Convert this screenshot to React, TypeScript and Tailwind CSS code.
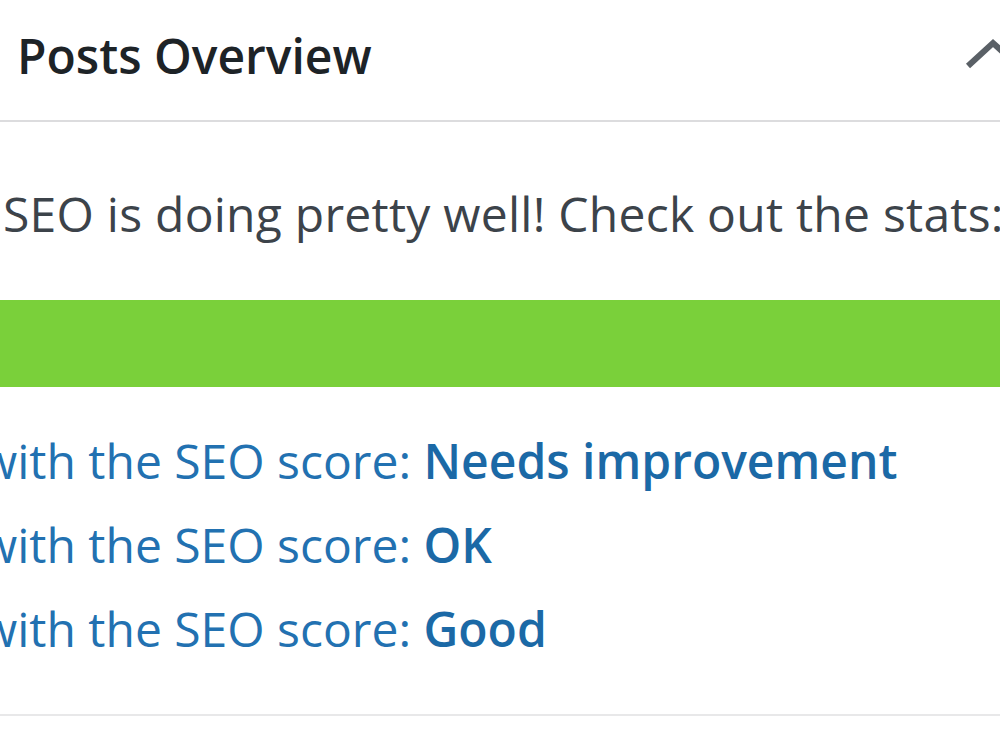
import React from 'react';

const scores = [
  { label: 'Needs improvement' },
  { label: 'OK' },
  { label: 'Good' },
];

export default function App() {
  return (
    <div className="relative h-[749px] w-[1000px] overflow-hidden bg-white font-['Open_Sans','Noto_Sans',sans-serif]">
      <header className="flex h-[122px] items-start border-b-2 border-[#dcdcde] pl-[17px] pt-[26px]">
        <h2 className="text-[48px] font-semibold leading-[60px] text-[#1d2327]">Posts Overview</h2>
        <svg className="ml-auto mr-[-20px] mt-[9px] shrink-0" width="60" height="40" viewBox="0 0 60 40">
          <polyline points="8,31 33,8 58,31" fill="none" stroke="#5a6066" strokeWidth="6" />
        </svg>
      </header>

      <p className="mt-[54px] whitespace-nowrap pl-[3px] text-[48px] leading-[76px] tracking-[0.25px] text-[#3c434a]">
        SEO is doing pretty well! Check out the stats:
      </p>

      <div className="mt-[48px] h-[87px] w-full bg-[#7ad03a]" />

      <ul className="mt-[32px] border-b-2 border-[#e8e8e9] pb-[43px]">
        {scores.map((s) => (
          <li key={s.label} className="ml-[-20px] whitespace-nowrap text-[48px] leading-[84px] text-[#2271b1]">
            with the SEO score: <b className="font-semibold text-[#1b69a6]">{s.label}</b>
          </li>
        ))}
      </ul>
    </div>
  );
}
